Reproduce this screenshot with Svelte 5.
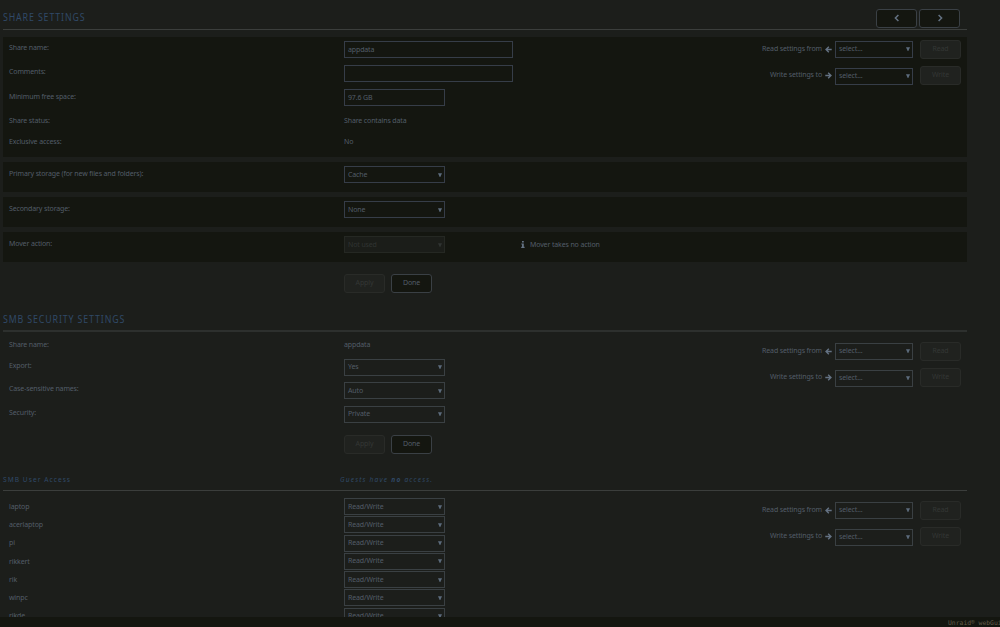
<script>
  const general = [
    { label: 'Share name:', kind: 'input', value: 'appdata', wide: true },
    { label: 'Comments:', kind: 'input', value: '', wide: true },
    { label: 'Minimum free space:', kind: 'input', value: '97.6 GB' },
    { label: 'Share status:', kind: 'text', value: 'Share contains data' },
    { label: 'Exclusive access:', kind: 'text', value: 'No' }
  ];
  const storage = [
    { label: 'Primary storage (for new files and folders):', value: 'Cache' },
    { label: 'Secondary storage:', value: 'None' },
    { label: 'Mover action:', value: 'Not used', disabled: true, note: 'Mover takes no action' }
  ];
  const smb = [
    { label: 'Share name:', kind: 'text', value: 'appdata' },
    { label: 'Export:', kind: 'select', value: 'Yes' },
    { label: 'Case-sensitive names:', kind: 'select', value: 'Auto' },
    { label: 'Security:', kind: 'select', value: 'Private' }
  ];
  const users = ['laptop', 'acerlaptop', 'pi', 'rikkert', 'rik', 'winpc', 'rikde'];
</script>

{#snippet select(value, disabled)}
  <div class="field" class:disabled>
    <span>{value}</span>
    <svg class="caret" viewBox="0 0 4 4"><path d="M0 .2h4L2.3 4h-.6z" /></svg>
  </div>
{/snippet}

{#snippet row(r)}
  <div class="row {r.kind}">
    <div class="label">{r.label}</div>
    {#if r.kind === 'text'}
      <div class="static">{r.value}</div>
    {:else if r.kind === 'input'}
      <div class="field" class:wide={r.wide}><span>{r.value}</span></div>
    {:else}
      {@render select(r.value, false)}
    {/if}
  </div>
{/snippet}

{#snippet copy()}
  <div class="copy">
    <div class="copyrow">
      <span class="t">Read settings from</span>
      <svg class="arrow" viewBox="0 0 12 12"><path d="M11.5 6H2M6.6 1.3L1.8 6l4.8 4.7" /></svg>
      {@render select('select...', false)}
      <div class="btn off">Read</div>
    </div>
    <div class="copyrow second">
      <span class="t">Write settings to</span>
      <svg class="arrow" viewBox="0 0 12 12"><path d="M.5 6H10M5.4 1.3L10.2 6l-4.8 4.7" /></svg>
      {@render select('select...', false)}
      <div class="btn off">Write</div>
    </div>
  </div>
{/snippet}

{#snippet actions()}
  <div class="actions">
    <div class="btn off">Apply</div>
    <div class="btn">Done</div>
  </div>
{/snippet}

<div class="page">
  <main>
    <header class="title first">
      <h1>SHARE SETTINGS</h1>
      <nav>
        <div class="btn"><svg viewBox="0 0 8 8"><path d="M5.4 1L2.4 4l3 3" /></svg></div>
        <div class="btn"><svg viewBox="0 0 8 8"><path d="M2.6 1l3 3-3 3" /></svg></div>
      </nav>
    </header>
    <section class="panel general">
      <div>{#each general as r}{@render row(r)}{/each}</div>
      {@render copy()}
    </section>
    {#each storage as s}
      <section class="panel single">
        <div class="row">
          <div class="label">{s.label}</div>
          {@render select(s.value, s.disabled)}
          {#if s.note}
            <div class="note">
              <svg viewBox="0 0 4 7"><path d="M1 0h1.8v1.5H1zM.3 2.4h2.5v3.4h.8V7H.2V5.8H1V3.6H.3z" /></svg>
              {s.note}
            </div>
          {/if}
        </div>
      </section>
    {/each}
    {@render actions()}

    <header class="title smbtitle"><h1>SMB SECURITY SETTINGS</h1></header>
    <section class="plain smb">
      <div>{#each smb as r}{@render row(r)}{/each}</div>
      {@render copy()}
    </section>
    {@render actions()}

    <header class="title sub">
      <h2>SMB User Access</h2>
      <em>Guests have <b>no</b> access.</em>
    </header>
    <section class="plain users">
      <div>
        {#each users as u}
          <div class="row">
            <div class="label">{u}</div>
            {@render select('Read/Write', false)}
          </div>
        {/each}
      </div>
      {@render copy()}
    </section>
  </main>
  <footer>Unraid<sup>®</sup> webGui</footer>
</div>

<style>
  :global(body) { margin: 0; background: #1c1e1b; }
  .page {
    height: 627px;
    width: 1000px;
    overflow: hidden;
    display: flex;
    flex-direction: column;
    background: #1c1e1b;
    color: #535d68;
    font: 7px/12px "Noto Sans", sans-serif;
    letter-spacing: -.13px;
  }
  .page :global(*) { box-sizing: border-box; }
  main { height: 617px; flex: none; overflow: hidden; padding: 0 33px 0 3px; }
  footer {
    height: 10px;
    background: #141610;
    color: #625b49;
    font: 6.4px/12px "DejaVu Sans Mono", monospace;
    letter-spacing: 0;
    padding-left: 948px;
    white-space: nowrap;
    overflow: hidden;
  }
  sup { font-size: 6px; line-height: 0; vertical-align: 1px; }
  .title { display: flex; border-bottom: 1px solid #3b3e3c; color: #304967; }
  h1, h2 { margin: 0; font-weight: 400; }
  h1 { font-size: 8.8px; line-height: 14px; letter-spacing: .88px; transform: scaleY(1.14); }
  h2 { font-size: 6.6px; letter-spacing: 1.05px; width: 337px; }
  .first { height: 30px; padding-top: 11px; justify-content: space-between; }
  nav { display: flex; gap: 2px; margin: -2px 7px 0 0; }
  nav svg { width: 8px; height: 8px; fill: none; stroke: #647283; stroke-width: 1.5; }
  .sub { height: 18px; margin-top: 19px; padding-top: 1px; }
  em { letter-spacing: 1.2px; font-size: 6.6px; }
  .panel, .plain { display: flex; justify-content: space-between; }
  .panel { background: #141610; }
  .general { height: 120px; margin-top: 7px; }
  .single { height: 30px; margin-top: 5px; }
  .row { display: flex; height: 24.2px; padding: 4px 0 0 6px; }
  .row.text { height: 21px; }
  .label { width: 335px; padding-top: 1.3px; }
  .single .label { padding-top: 1.7px; }
  .static { padding-top: 1.3px; }
  .field {
    width: 101px;
    height: 17px;
    border: 1px solid #363d48;
    display: flex;
    justify-content: space-between;
    align-items: center;
    padding: 0 2px 0 3px;
    white-space: nowrap;
  }
  .plain .field { border-color: #3a4043; }
  .wide { width: 169px; }
  .caret { width: 4px; height: 4px; fill: #5c6b7c; }
  .disabled { background: #1b1d19; border-color: #252823; color: #303432; }
  .disabled .caret { fill: #303432; }
  .note { margin-left: 76px; display: flex; align-items: center; gap: 5px; height: 17px; }
  .note svg { width: 4px; height: 7px; fill: #647283; }
  .btn {
    width: 41px;
    height: 18.5px;
    border: 1px solid #3a4045;
    border-radius: 3px;
    background: #141610;
    display: flex;
    align-items: center;
    justify-content: center;
  }
  .off { background: #20221f; border-color: #292b28; color: #343735; }
  .actions { display: flex; gap: 6px; padding-left: 341px; margin-top: 12px; height: 19px; }
  .smbtitle { height: 19px; margin-top: 20px; border-bottom-width: 2px; border-color: #2d302e; }
  .smb { height: 89px; padding-top: 2px; }
  .smb .row { height: 23.7px; }
  .smb .row.text { height: 20.5px; }
  .smb + .actions { margin-top: 14px; }
  .users { padding-top: 7px; }
  .users .row { height: 18.27px; padding-top: 0; }
  .users .label { padding-top: 2.8px; }
  .copy { padding: 3px 6px 0 0; }
  .smb .copy { padding-top: 8px; }
  .users .copy { padding-top: 3px; }
  .copyrow { display: flex; align-items: center; justify-content: flex-end; height: 18.5px; }
  .second { margin-top: 7.6px; }
  .copyrow .field { width: 78px; margin: 0 7px 0 3px; }
  .second .field { position: relative; top: .8px; }
  .arrow { width: 7px; height: 7px; margin-left: 3px; fill: none; stroke: #647283; stroke-width: 2.4; }
</style>
